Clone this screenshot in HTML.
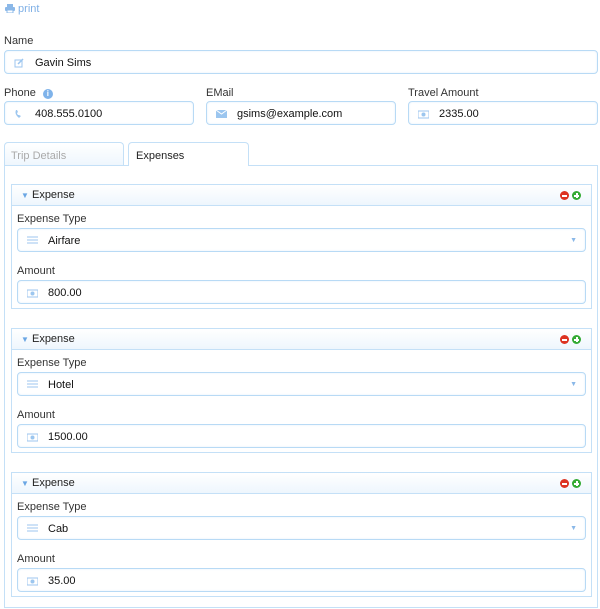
<!DOCTYPE html>
<html><head><style>
*{box-sizing:border-box}
body{margin:0;width:600px;height:609px;background:#fff;font-family:"Liberation Sans",sans-serif;font-size:11px;color:#222;position:relative;overflow:hidden}
.a{position:absolute}
.lbl{position:absolute;font-size:11px;color:#333}
.inp{position:absolute;height:24px;border:1px solid #b8daf5;border-radius:4px;background:#fff;box-shadow:inset 0 0 2px #e3f1fc}
.inp .t{position:absolute;left:30px;top:6px;font-size:11px;color:#111}
.ic{position:absolute;left:9px;top:7px}
.hdr{position:absolute;left:11px;width:581px;height:22px;border:1px solid #c4e0f7;background:linear-gradient(#fff,#eef6fd);}
.sec{position:absolute;left:11px;width:581px;height:126px;border:1px solid #c4e0f7;border-top:none}
</style></head><body>
<div class="a" style="left:5px;top:3px;color:#7fb0e6;font-size:11px">
<svg width="10" height="9" viewBox="0 0 10 9" style="vertical-align:-1px"><rect x="2" y="0" width="6" height="3" fill="#8bb8e8"/><rect x="0" y="3" width="10" height="4" rx="1" fill="#8bb8e8"/><rect x="2" y="6" width="6" height="3" fill="#fff" stroke="#8bb8e8"/></svg> print</div>

<div class="lbl" style="left:4px;top:35px">Name</div>
<div class="inp" style="left:4px;top:50px;width:594px"><svg class="ic" width="10" height="10"><rect x="1" y="2" width="7" height="7" fill="none" stroke="#9cc6ef"/><path d="M4 6 L9 1" stroke="#9cc6ef" stroke-width="1.5"/></svg><span class="t">Gavin Sims</span></div>

<div class="lbl" style="left:4px;top:87px">Phone <span style="display:inline-block;width:10px;height:10px;border-radius:50%;background:#7fb3ea;color:#fff;font-size:8px;text-align:center;line-height:10px;font-weight:bold;margin-left:4px">i</span></div>
<div class="inp" style="left:4px;top:101px;width:190px"><svg class="ic" width="10" height="10"><path d="M2 1 Q0 5 5 9 L7 7 L5 6 L4 6 Q3 5 3 4 L4 3 L3 1Z" fill="#9cc6ef"/></svg><span class="t">408.555.0100</span></div>
<div class="lbl" style="left:206px;top:87px">EMail</div>
<div class="inp" style="left:206px;top:101px;width:190px"><svg class="ic" width="11" height="10"><rect x="0" y="1" width="11" height="8" fill="#9cc6ef"/><path d="M0 1 L5.5 5 L11 1" stroke="#fff" fill="none"/></svg><span class="t">gsims@example.com</span></div>
<div class="lbl" style="left:408px;top:87px">Travel Amount</div>
<div class="inp" style="left:408px;top:101px;width:190px"><svg class="ic" width="11" height="10" style="top:8px"><rect x="0" y="1" width="11" height="7" fill="none" stroke="#9cc6ef"/><circle cx="5.5" cy="4.5" r="2" fill="#9cc6ef"/></svg><span class="t">2335.00</span></div>

<div class="a" style="left:4px;top:142px;width:120px;height:24px;border:1px solid #c4e0f7;border-bottom:none;border-radius:4px 4px 0 0;background:linear-gradient(#fff,#eef6fd);color:#aaa;padding:7px 0 0 6px">Trip Details</div>
<div class="a" style="left:4px;top:165px;width:594px;height:443px;border:1px solid #c4e0f7"></div>
<div class="a" style="left:128px;top:142px;width:121px;height:24px;border:1px solid #c4e0f7;border-bottom:none;border-radius:4px 4px 0 0;background:#fff;color:#222;padding:7px 0 0 7px">Expenses</div>

<div class="hdr" style="top:184px"><span class="a" style="left:9px;top:4px;font-size:11px"><span style="color:#6aa6e4;font-size:8px">&#9660;</span> Expense</span><span class="a" style="right:22px;top:6px;width:9px;height:9px;border-radius:50%;background:#d32;"><span class="a" style="left:2px;top:4px;width:5px;height:1.5px;background:#fff"></span></span><span class="a" style="right:10px;top:6px;width:9px;height:9px;border-radius:50%;background:#3a3;"><span class="a" style="left:2px;top:4px;width:5px;height:1.5px;background:#fff"></span><span class="a" style="left:4px;top:2px;width:1.5px;height:5px;background:#fff"></span></span></div>
<div class="sec" style="top:206px;height:103px"></div>
<div class="lbl" style="left:17px;top:213px">Expense Type</div>
<div class="inp" style="left:17px;top:228px;width:569px"><svg class="ic" width="11" height="9"><path d="M0 1H11M0 4H11M0 7H11" stroke="#9cc6ef"/></svg><span class="t">Airfare</span><span class="a" style="right:8px;top:8px;color:#8ab8e8;font-size:7px">&#9660;</span></div>
<div class="lbl" style="left:17px;top:265px">Amount</div>
<div class="inp" style="left:17px;top:280px;width:569px"><svg class="ic" width="11" height="10" style="top:8px"><rect x="0" y="1" width="11" height="7" fill="none" stroke="#9cc6ef"/><circle cx="5.5" cy="4.5" r="2" fill="#9cc6ef"/></svg><span class="t">800.00</span></div>

<div class="hdr" style="top:328px"><span class="a" style="left:9px;top:4px;font-size:11px"><span style="color:#6aa6e4;font-size:8px">&#9660;</span> Expense</span><span class="a" style="right:22px;top:6px;width:9px;height:9px;border-radius:50%;background:#d32;"><span class="a" style="left:2px;top:4px;width:5px;height:1.5px;background:#fff"></span></span><span class="a" style="right:10px;top:6px;width:9px;height:9px;border-radius:50%;background:#3a3;"><span class="a" style="left:2px;top:4px;width:5px;height:1.5px;background:#fff"></span><span class="a" style="left:4px;top:2px;width:1.5px;height:5px;background:#fff"></span></span></div>
<div class="sec" style="top:350px;height:103px"></div>
<div class="lbl" style="left:17px;top:357px">Expense Type</div>
<div class="inp" style="left:17px;top:372px;width:569px"><svg class="ic" width="11" height="9"><path d="M0 1H11M0 4H11M0 7H11" stroke="#9cc6ef"/></svg><span class="t">Hotel</span><span class="a" style="right:8px;top:8px;color:#8ab8e8;font-size:7px">&#9660;</span></div>
<div class="lbl" style="left:17px;top:409px">Amount</div>
<div class="inp" style="left:17px;top:424px;width:569px"><svg class="ic" width="11" height="10" style="top:8px"><rect x="0" y="1" width="11" height="7" fill="none" stroke="#9cc6ef"/><circle cx="5.5" cy="4.5" r="2" fill="#9cc6ef"/></svg><span class="t">1500.00</span></div>

<div class="hdr" style="top:472px"><span class="a" style="left:9px;top:4px;font-size:11px"><span style="color:#6aa6e4;font-size:8px">&#9660;</span> Expense</span><span class="a" style="right:22px;top:6px;width:9px;height:9px;border-radius:50%;background:#d32;"><span class="a" style="left:2px;top:4px;width:5px;height:1.5px;background:#fff"></span></span><span class="a" style="right:10px;top:6px;width:9px;height:9px;border-radius:50%;background:#3a3;"><span class="a" style="left:2px;top:4px;width:5px;height:1.5px;background:#fff"></span><span class="a" style="left:4px;top:2px;width:1.5px;height:5px;background:#fff"></span></span></div>
<div class="sec" style="top:494px;height:103px"></div>
<div class="lbl" style="left:17px;top:501px">Expense Type</div>
<div class="inp" style="left:17px;top:516px;width:569px"><svg class="ic" width="11" height="9"><path d="M0 1H11M0 4H11M0 7H11" stroke="#9cc6ef"/></svg><span class="t">Cab</span><span class="a" style="right:8px;top:8px;color:#8ab8e8;font-size:7px">&#9660;</span></div>
<div class="lbl" style="left:17px;top:553px">Amount</div>
<div class="inp" style="left:17px;top:568px;width:569px"><svg class="ic" width="11" height="10" style="top:8px"><rect x="0" y="1" width="11" height="7" fill="none" stroke="#9cc6ef"/><circle cx="5.5" cy="4.5" r="2" fill="#9cc6ef"/></svg><span class="t">35.00</span></div>
</body></html>
